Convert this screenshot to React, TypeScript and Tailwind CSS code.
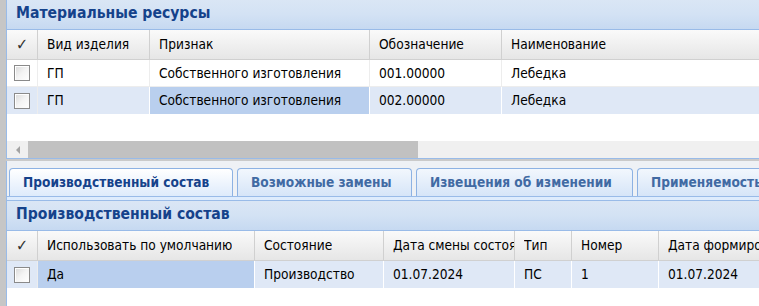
import React from "react";

type Col = { title: string; w: number };

const font = { fontFamily: '"DejaVu Sans Condensed", "DejaVu Sans", Tahoma, sans-serif' };

function CheckBox() {
  return (
    <div className="w-[16px] h-[16px] border border-[#8a8a8a] bg-gradient-to-br from-[#d9d9d9] via-[#f4f4f4] to-white shadow-[inset_1px_1px_0_#fff]" />
  );
}

function Cell({ w, children, className }: { w: number; children: React.ReactNode; className: string }) {
  return (
    <div className={`shrink-0 flex items-center pl-[9px] border-r overflow-hidden ${className}`} style={{ width: w }}>
      <span className="block min-w-0 overflow-hidden whitespace-nowrap">{children}</span>
    </div>
  );
}

function Grid({ cols, rows, selected }: { cols: Col[]; rows: { cells: string[]; alt?: boolean }[]; selected: [number, number] }) {
  return (
    <div className="text-[13.6px] text-black">
      <div className="flex h-[30px] bg-gradient-to-b from-[#fafafa] to-[#e6e6e6] border-b border-[#d0d0d0]">
        <div className="w-[31px] shrink-0 flex items-center justify-center border-r border-[#d0d0d0] text-[#333] text-[16px]">✓</div>
        {cols.map((c, i) => (
          <Cell key={i} w={c.w} className="border-[#d0d0d0]">
            {c.title}
          </Cell>
        ))}
      </div>
      {rows.map((r, ri) => (
        <div key={ri} className={`flex h-[27px] ${r.alt ? "bg-[#dfe8f6]" : "bg-white border-b border-[#ededed]"}`}>
          <div className="w-[31px] shrink-0 flex items-center justify-center border-r border-[#ededed]">
            <CheckBox />
          </div>
          {r.cells.map((t, ci) => (
            <Cell
              key={ci}
              w={cols[ci].w}
              className={`${selected[0] === ri && selected[1] === ci ? "bg-[#b9cfee]" : ""} ${r.alt ? "border-white" : "border-[#ededed]"}`}
            >
              {t}
            </Cell>
          ))}
        </div>
      ))}
    </div>
  );
}

function PanelHeader({ title }: { title: string }) {
  return (
    <div className="h-[30px] flex items-end pb-[7px] pl-[9px] bg-gradient-to-b from-[#dae6f5] via-[#d3e2f4] to-[#c6d9f1] border-b border-[#99bbe8] text-[15.6px] leading-[18px] font-bold text-[#15428b]">
      {title}
    </div>
  );
}

export default function App() {
  const topCols: Col[] = [
    { title: "Вид изделия", w: 112 },
    { title: "Признак", w: 220 },
    { title: "Обозначение", w: 132 },
    { title: "Наименование", w: 260 },
  ];
  const bottomCols: Col[] = [
    { title: "Использовать по умолчанию", w: 217 },
    { title: "Состояние", w: 129 },
    { title: "Дата смены состояния", w: 131 },
    { title: "Тип", w: 57 },
    { title: "Номер", w: 87 },
    { title: "Дата формирования", w: 150 },
  ];
  const tabs = [
    { t: "Производственный состав", w: 224, active: true },
    { t: "Возможные замены", w: 175 },
    { t: "Извещения об изменении", w: 217 },
    { t: "Применяемость", w: 160 },
  ];

  return (
    <div className="w-[759px] h-[306px] overflow-hidden bg-[#c6c6c6] pl-[6px]" style={font}>
      <div className="bg-white border-l border-[#99bbe8] h-[159px] flex flex-col">
        <PanelHeader title="Материальные ресурсы" />
        <Grid
          cols={topCols}
          rows={[
            { cells: ["ГП", "Собственного изготовления", "001.00000", "Лебедка"] },
            { cells: ["ГП", "Собственного изготовления", "002.00000", "Лебедка"], alt: true },
          ]}
          selected={[1, 1]}
        />
        <div className="flex-1" />
        <div className="h-[17px] flex bg-[#f0f0f0]">
          <div className="w-[21px] flex items-center justify-center">
            <div className="w-0 h-0 border-y-[4px] border-y-transparent border-r-[4px] border-r-[#a3a3a3]" />
          </div>
          <div className="w-[390px] bg-[#c1c1c1]" />
        </div>
        <div className="h-[1px] bg-[#99bbe8]" />
      </div>
      <div className="h-[2px] bg-[#cacaca]" />
      <div className="bg-[#eef1f5] border-l border-[#99bbe8] h-[36px] flex items-end gap-[4px] pl-[2px] border-b border-[#99bbe8]">
        {tabs.map((tab, i) => (
          <div
            key={i}
            className={`shrink-0 h-[28px] rounded-t-[4px] border border-b-0 border-[#8db2e3] flex items-center pl-[13px] pb-[1px] whitespace-nowrap overflow-hidden text-[13.6px] font-bold ${
              tab.active
                ? "bg-gradient-to-b from-white to-[#deebfb] text-[#15428b]"
                : "bg-gradient-to-b from-[#f2f7fd] to-[#d6e5f8] text-[#416aa3]"
            }`}
            style={{ width: tab.w }}
          >
            {tab.t}
          </div>
        ))}
      </div>
      <div className="h-[3px] bg-[#deecfd] border-l border-[#99bbe8]" />
      <div className="bg-white border-l border-t border-[#99bbe8] h-[120px]">
        <PanelHeader title="Производственный состав" />
        <Grid
          cols={bottomCols}
          rows={[{ cells: ["Да", "Производство", "01.07.2024", "ПС", "1", "01.07.2024"], alt: true }]}
          selected={[0, 0]}
        />
      </div>
    </div>
  );
}
